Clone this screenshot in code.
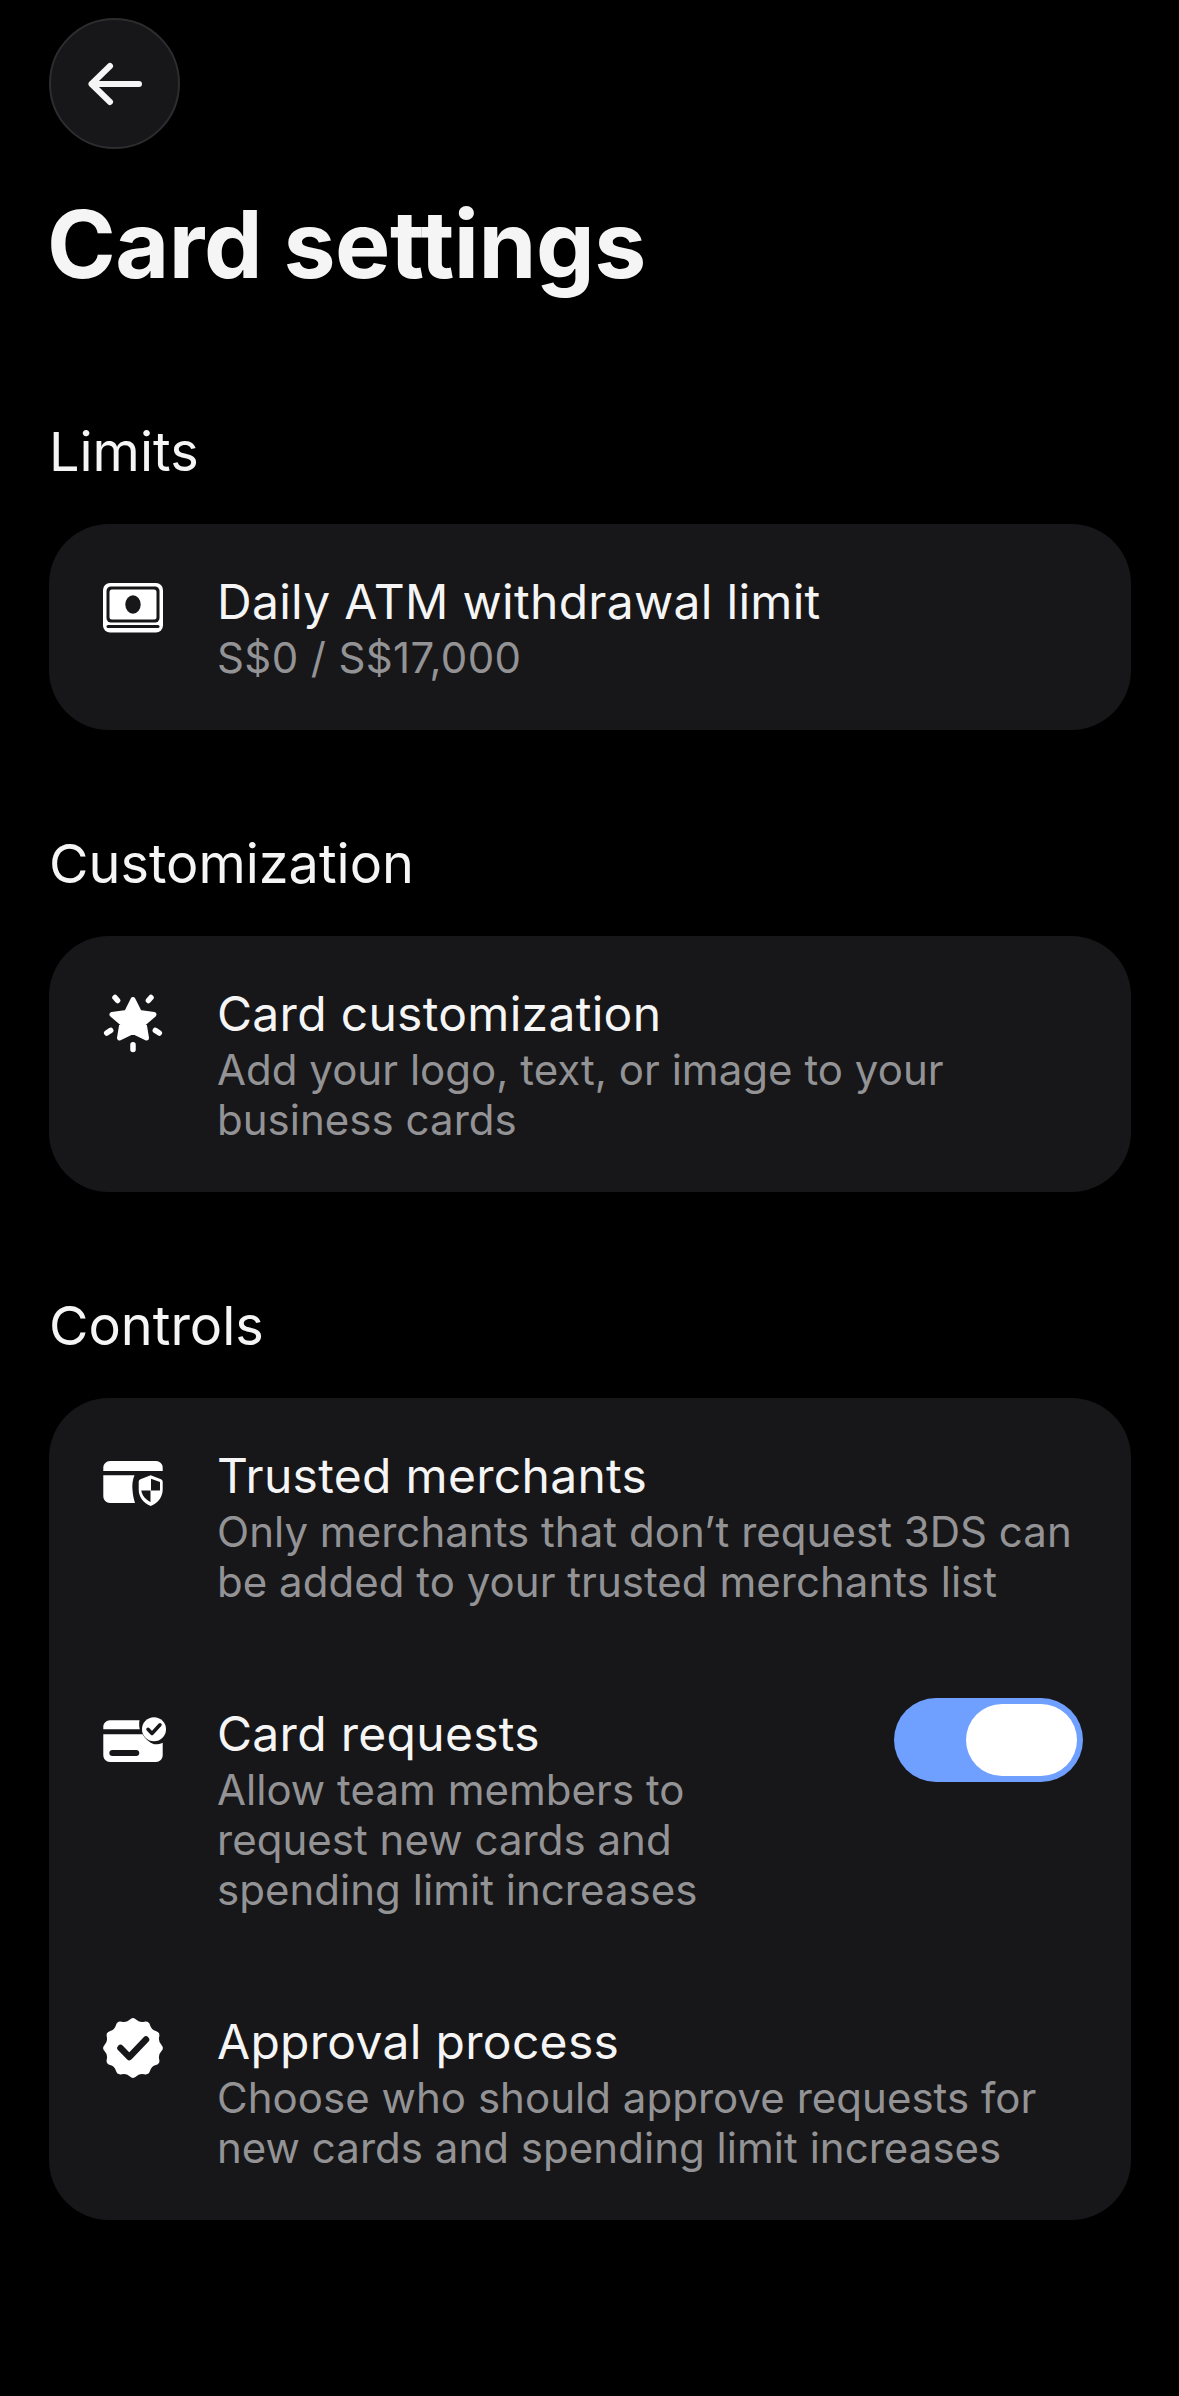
<script>
  // 12-lobed badge outline around the centre of a 72 box
  function badgePath() {
    const lobes = 12;
    const pts = [];
    for (let i = 0; i < lobes * 2; i++) {
      const a = (Math.PI * i) / lobes - Math.PI / 2;
      const r = i % 2 === 0 ? 31.5 : 26;
      pts.push([36 + r * Math.cos(a), 36 + r * Math.sin(a)]);
    }
    const mid = (a, b) => [(a[0] + b[0]) / 2, (a[1] + b[1]) / 2];
    const start = mid(pts[pts.length - 1], pts[0]);
    let d = `M${start[0].toFixed(2)} ${start[1].toFixed(2)}`;
    for (let i = 0; i < pts.length; i++) {
      const m = mid(pts[i], pts[(i + 1) % pts.length]);
      d += `Q${pts[i][0].toFixed(2)} ${pts[i][1].toFixed(2)} ${m[0].toFixed(2)} ${m[1].toFixed(2)}`;
    }
    return d + "Z";
  }
</script>

<main class="page">
  <button class="back" aria-label="Back">
    <svg width="60" height="48" viewBox="0 0 60 48" fill="none" stroke="#f5f5f5" stroke-width="6" stroke-linecap="round" stroke-linejoin="round">
      <path d="M54 24H6.500M25 6 6.500 24 25 42" />
    </svg>
  </button>

  <h1>Card settings</h1>

  <h2>Limits</h2>
  <section class="card">
    <div class="row">
      <svg class="icon" viewBox="0 0 72 72">
        <rect x="6" y="11" width="60" height="49.500" rx="7" fill="#fff" />
        <rect x="9.500" y="14.500" width="53" height="36" rx="4.500" fill="#171719" />
        <rect x="12.500" y="17.500" width="47" height="30" rx="2.500" fill="#fff" />
        <ellipse cx="36" cy="32.500" rx="7.700" ry="9.200" fill="#171719" />
        <path d="M11 54.500H61" stroke="#171719" stroke-width="3" fill="none" stroke-linecap="round" />
      </svg>
      <div class="text">
        <div class="title">Daily ATM withdrawal limit</div>
        <div class="sub amount">S$0 / S$17,000</div>
      </div>
    </div>
  </section>

  <h2>Customization</h2>
  <section class="card">
    <div class="row">
      <svg class="icon" viewBox="0 0 72 72">
        <path d="M36 15.500 42.500 28.500 57 30.500 47 39 49.500 54 36 47.500 22.500 54 25 39 15 30.500 29.500 28.500Z" fill="#fff" stroke="#fff" stroke-width="5" stroke-linejoin="round" />
        <path d="M18 13.500 20.600 16.500M54 13.500 51.400 16.500M9.700 49 13.700 46.400M62.300 49 58.300 46.400M36 60.700V65.500" fill="none" stroke="#fff" stroke-width="5.500" stroke-linecap="round" />
      </svg>
      <div class="text">
        <div class="title">Card customization</div>
        <div class="sub">Add your logo, text, or image to your business cards</div>
      </div>
    </div>
  </section>

  <h2>Controls</h2>
  <section class="card controls">
    <div class="row">
      <svg class="icon" viewBox="0 0 72 72" fill="#fff">
        <path d="M13 15H59c3.700 0 6.700 3 6.700 6.700V25H6.300v-3.300C6.300 18 9.300 15 13 15Z" />
        <path d="M6.300 29.300H37.500C35.500 34 35 39 35.500 44c.3 4.800 1.300 9.300 2.500 13H13c-3.700 0-6.700-3-6.700-6.700V29.300Z" />
        <path fill-rule="evenodd" d="M53.700 29.300 64 33.200c1 .4 1.700 1.400 1.700 2.500v7.800c0 7.500-4.700 13.500-12 16.500-7.300-3-12-9-12-16.500v-7.800c0-1.100.7-2.100 1.700-2.500l10.300-3.900Z" />
        <path fill="#171719" d="M54 34v10.500h8.900c.1-.6.100-1 .1-1.500v-7l-9-3.200V34ZM53.500 44.500H44.300c.8 5 4.200 9 9.200 11.500V44.500Z" />
      </svg>
      <div class="text">
        <div class="title">Trusted merchants</div>
        <div class="sub">Only merchants that don’t request 3DS can be added to your trusted merchants list</div>
      </div>
    </div>

    <div class="row">
      <svg class="icon" viewBox="0 0 72 72" fill="#fff">
        <path d="M13 16.300H42.500C42 19 42 22.500 42.800 25.300H6.300V23C6.300 19.300 9.300 16.300 13 16.300Z" />
        <path fill-rule="evenodd" d="M6.300 30.300H45.500c3 5 7 8.500 11.500 10 3.200.2 6.200-.4 8.700-1.500v12.500c0 3.700-3 6.700-6.700 6.700H13c-3.700 0-6.700-3-6.700-6.700V30.300ZM15.300 46c-1.700 0-3 1.300-3 3s1.300 3 3 3h24c1.700 0 3-1.300 3-3s-1.300-3-3-3h-24Z" />
        <circle cx="57" cy="25.300" r="12" />
        <path d="M51 25.300 55 29.500 63 20.800" fill="none" stroke="#171719" stroke-width="3.500" stroke-linecap="round" stroke-linejoin="round" />
      </svg>
      <div class="text narrow">
        <div class="title">Card requests</div>
        <div class="sub">Allow team members to request new cards and spending limit increases</div>
      </div>
      <div class="toggle"><span class="thumb"></span></div>
    </div>

    <div class="row">
      <svg class="icon" viewBox="0 0 72 72">
        <path d={badgePath()} fill="#fff" />
        <path d="M23.500 36 32.300 45 49 27.500" fill="none" stroke="#171719" stroke-width="6.500" stroke-linecap="round" stroke-linejoin="round" />
      </svg>
      <div class="text">
        <div class="title">Approval process</div>
        <div class="sub">Choose who should approve requests for new cards and spending limit increases</div>
      </div>
    </div>
  </section>
</main>

<style>
  :global(body) {
    background: #000;
    margin: 0;
  }

  .page {
    box-sizing: border-box;
    height: 2396px;
    padding: 18px 48px 0 49px;
    font-family: Inter, "Noto Sans", sans-serif;
    color: #f5f5f5;
    overflow: hidden;
  }

  .back {
    display: flex;
    align-items: center;
    justify-content: center;
    box-sizing: border-box;
    width: 131px;
    height: 131px;
    padding: 0;
    background: #171719;
    border: 2px solid #2d2d2f;
    border-radius: 50%;
  }

  h1 {
    margin: 41px 0 0 -2px;
    font-size: 93px;
    line-height: 108px;
    font-weight: 700;
    letter-spacing: -0.5px;
  }

  h2 {
    margin: 0;
    font-size: 54px;
    line-height: 72px;
    font-weight: 400;
  }

  h1 + h2 {
    margin-top: 118px;
  }

  h2:not(h1 + h2) {
    margin-top: 98px;
  }

  .card {
    margin-top: 36px;
    padding: 48px 48px 47px;
    background: #171719;
    border-radius: 60px;
  }

  .controls {
    display: flex;
    flex-direction: column;
    gap: 97px;
  }

  .row {
    display: flex;
    gap: 48px;
  }

  .icon {
    flex: none;
    width: 72px;
    height: 72px;
  }

  .text {
    flex: 1;
    min-width: 0;
  }

  .text.narrow {
    flex: 0 0 500px;
  }

  .title {
    font-size: 48px;
    line-height: 60px;
    margin-bottom: 1px;
    font-weight: 400;
    letter-spacing: 0.3px;
  }

  .sub {
    font-size: 42px;
    line-height: 50px;
    letter-spacing: 0.03px;
    color: #939396;
  }

  .amount {
    letter-spacing: 0.38px;
  }

  .toggle {
    display: flex;
    justify-content: flex-end;
    align-items: center;
    box-sizing: border-box;
    width: 189px;
    height: 84px;
    margin: -6px 0 0 auto;
    padding: 0 6px;
    background: #6f9fff;
    border-radius: 42px;
  }

  .thumb {
    width: 111px;
    height: 72px;
    background: #fff;
    border-radius: 36px;
  }
</style>
